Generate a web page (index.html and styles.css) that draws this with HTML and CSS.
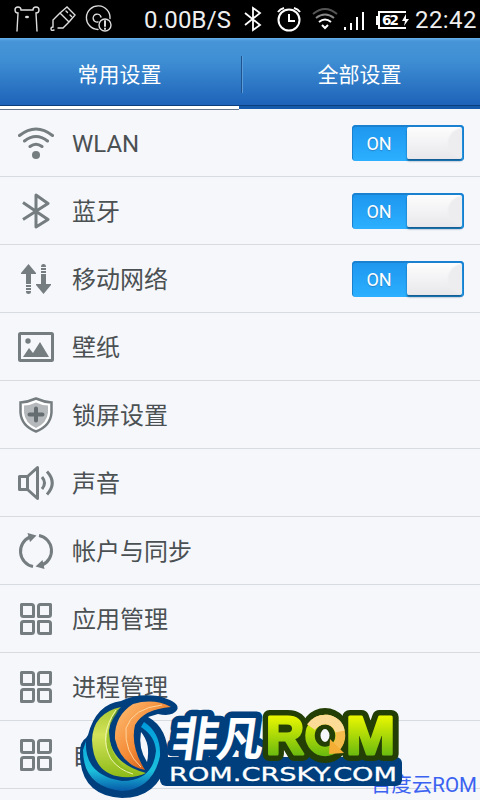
FILE: index.html
```
<!DOCTYPE html>
<html lang="zh-CN">
  <head>
    <meta charset="UTF-8" />
    <meta name="viewport" content="width=device-width, initial-scale=1.0" />
    <title>设置</title>
    <link rel="stylesheet" href="styles.css">
  </head>
  <body>
    <div class="phone">
      <!-- Status bar -->
      <header class="status-bar">
        <svg class="status-left" width="116" height="38" viewBox="0 0 116 38">
          <g fill="none" stroke="#ddd" stroke-width="1.4" stroke-linecap="round">
            <path d="M17 31l1-18a3 3 0 1 1 3-3h12a3 3 0 1 1 3 3l1 18" />
            <path d="M54 30q-3 1-3-1 0-2 2-2v-7l7-7 9 9-6 6h-5M60 13l7-6 8 8-6 7M66 11l1.500 1.500M70 15l1.500 1.500" />
            <path d="M98 29.500a11.800 11.800 0 1 1 12-11M98 22a4 4 0 1 1 3-5" />
            <circle cx="105" cy="25" r="6" />
            <path d="M105 21v5M105 28.500v.5" stroke-width="2" />
          </g>
          <ellipse cx="27" cy="17" rx="2" ry="1.200" fill="#ddd" />
        </svg>
        <span class="speed">0.00B/S</span>
        <svg class="status-right" width="170" height="38" viewBox="0 0 170 38">
          <g fill="none" stroke="#fff" stroke-width="2">
            <path d="M5 13l15 12-7 5V8l7 5L5 25" stroke-width="1.800" />
            <circle cx="49" cy="20" r="10.500" />
            <path d="M49 14v7h6M38 12q2-3 6-4M54 8q4 1 6 4" />
            <path d="M73 14q12-10 24 0" stroke="#555" />
            <path d="M76 18q9-7 18 0" stroke="#888" />
            <path d="M79 22q6-5 12 0" />
            <path d="M82 25l3 3 3-3" />
            <path d="M105 27v3M111 23v7M117 17v13M123 12v18" />
            <path d="M166 12h-27v16h27" />
          </g>
          <path d="M136 16h3v9h-3zM166 14l-4 7h3l-1 5 5-7h-3z" fill="#fff" />
          <text class="battery-text" x="142" y="25" textLength="17">62</text>
        </svg>
        <span class="clock">22:42</span>
      </header>

      <!-- Tabs -->
      <nav class="tabs">
        <a class="tab active">常用设置</a>
        <a class="tab">全部设置</a>
      </nav>

      <!-- Settings list -->
      <ul class="settings">
        <li class="row">
          <svg class="icon" viewBox="0 0 36 36">
            <g fill="none" stroke="#757d80" stroke-width="3" stroke-linecap="round">
              <path d="M1.500 10.500q16.500-13 33 0M6.500 16q11.500-9 23 0M12 21.500q6-4.500 12 0" />
            </g>
            <circle cx="18" cy="30" r="4" fill="#757d80" />
          </svg>
          <span class="label">WLAN</span>
          <span class="switch"><span class="switch-text">ON</span><span class="knob"></span></span>
        </li>
        <li class="row">
          <svg class="icon" viewBox="0 0 36 36">
            <path class="line" d="M5 9.500l25 17L18 34V2l12 8.500L5 26.500" />
          </svg>
          <span class="label">蓝牙</span>
          <span class="switch"><span class="switch-text">ON</span><span class="knob"></span></span>
        </li>
        <li class="row">
          <svg class="icon" viewBox="0 0 36 36" fill="#757d80">
            <path d="M10.500 3L18 12v1h-5v10H8V13H3v-1zM8 24h5v2H8zM8 27h5v2H8zM8 30h5v1q0 2-2.500 2T8 31z" />
            <path d="M25.500 33L33 24v-1h-5V13h-5v10h-5v1zM23 10h5v2h-5zM23 7h5v2h-5zM23 6q0-3 2.500-3T28 6z" />
          </svg>
          <span class="label">移动网络</span>
          <span class="switch"><span class="switch-text">ON</span><span class="knob"></span></span>
        </li>
        <li class="row">
          <svg class="icon" viewBox="0 0 36 36">
            <rect class="line" x="1.500" y="4.500" width="33" height="27" rx="1" />
            <path d="M5 28l6-9 4 5 7-11 9 15z" fill="#757d80" />
            <circle cx="10" cy="12" r="2.700" fill="#757d80" />
          </svg>
          <span class="label">壁纸</span>
        </li>
        <li class="row">
          <svg class="icon" viewBox="0 0 36 36">
            <path d="M18 1.500q8 3.500 15.500 4v10Q32.500 29 18 34.500 3.500 29 2.500 15.500v-10Q10 5 18 1.500z" fill="#fff" stroke="#757d80" stroke-width="2.500" />
            <path d="M18 5.500q6 3 12 3v7Q29 26 18 31 7 26 6 15.500v-7q6 0 12-3z" fill="#b5b9bb" />
            <path d="M18 11.500v12M11.500 17.500h13" stroke="#656d70" stroke-width="4" stroke-linecap="round" />
          </svg>
          <span class="label">锁屏设置</span>
        </li>
        <li class="row">
          <svg class="icon" viewBox="0 0 36 36">
            <path class="line" d="M9.500 11.500H1.500v13h8zM9.500 11.500l10-9v31l-10-9" />
            <path class="line" d="M24 12q5 6 0 12M29 6.500q10.500 11.500 0 23" />
          </svg>
          <span class="label">声音</span>
        </li>
        <li class="row">
          <svg class="icon" viewBox="0 0 36 36">
            <path class="line" d="M15 33.500A15.500 15.500 0 0 1 12 4M21 2.500a15.500 15.500 0 0 1 3 29.500" />
            <path d="M9.500 0l9 2.500-6.500 6.500zM26.500 36l-9-2.500 7-6.500z" fill="#757d80" />
          </svg>
          <span class="label">帐户与同步</span>
        </li>
        <li class="row">
          <svg class="icon" viewBox="0 0 36 36">
            <path class="line" d="M3.500 3.500h10q2 0 2 2v10h-10q-2 0-2-2zM32.500 3.500h-10q-2 0-2 2v10h10q2 0 2-2zM3.500 32.500h10q2 0 2-2v-10h-10q-2 0-2 2zM32.500 32.500h-10q-2 0-2-2v-10h10q2 0 2 2z" />
          </svg>
          <span class="label">应用管理</span>
        </li>
        <li class="row">
          <svg class="icon" viewBox="0 0 36 36">
            <path class="line" d="M3.500 3.500h10q2 0 2 2v10h-10q-2 0-2-2zM32.500 3.500h-10q-2 0-2 2v10h10q2 0 2-2zM3.500 32.500h10q2 0 2-2v-10h-10q-2 0-2 2zM32.500 32.500h-10q-2 0-2-2v-10h10q2 0 2 2z" />
          </svg>
          <span class="label">进程管理</span>
        </li>
        <li class="row">
          <svg class="icon" viewBox="0 0 36 36">
            <path class="line" d="M3.500 3.500h10q2 0 2 2v10h-10q-2 0-2-2zM32.500 3.500h-10q-2 0-2 2v10h10q2 0 2-2zM3.500 32.500h10q2 0 2-2v-10h-10q-2 0-2 2zM32.500 32.500h-10q-2 0-2-2v-10h10q2 0 2 2z" />
          </svg>
          <span class="label">自启管理</span>
        </li>
      </ul>

      <span class="watermark">百度云ROM</span>

      <!-- Site logo over the list -->
      <svg class="logo" width="330" height="108" viewBox="76 692 330 108">
        <defs>
          <linearGradient id="green" x1="0" y1="0" x2="0" y2="1">
            <stop offset="0" stop-color="#a9c832" />
            <stop offset=".4" stop-color="#d3e35a" />
            <stop offset="1" stop-color="#8dbb18" />
          </linearGradient>
          <linearGradient id="letters" gradientUnits="userSpaceOnUse" x1="0" y1="714" x2="0" y2="758">
            <stop offset="0" stop-color="#f0fa00" />
            <stop offset="1" stop-color="#62b610" />
          </linearGradient>
          <linearGradient id="orange" x1="0" y1="0" x2="1" y2="1">
            <stop offset="0" stop-color="#ffc078" />
            <stop offset=".5" stop-color="#f38a35" />
            <stop offset="1" stop-color="#b83a08" />
          </linearGradient>
          <linearGradient id="ice" gradientUnits="userSpaceOnUse" x1="0" y1="714" x2="0" y2="760">
            <stop offset="0" stop-color="#fff" />
            <stop offset="1" stop-color="#c6ebff" />
          </linearGradient>
          <linearGradient id="aqua" x1="0" y1="0" x2="0" y2="1">
            <stop offset="0" stop-color="#009bdc" />
            <stop offset=".7" stop-color="#1cc0dc" />
            <stop offset="1" stop-color="#075aa8" />
          </linearGradient>
        </defs>
        <rect x="160" y="757" width="242" height="29" rx="6" fill="#003f7d" />
        <path d="M88 735Q96 704 121 701Q137 693 158 696Q181 702 177 710Q172 717 158 714L148 717Q168 728 168 757Q160 798 122 798Q82 796 80 757Q79 742 86 738z" fill="#003f7d" />
        <path d="M141 732Q151 744 147 762Q138 748 141 732z" fill="#f5f7fb" />
        <path d="M86 741Q84 775 122 781Q153 781 156 751Q155 736 141 727L144 722Q161 733 160 756Q153 789 122 791Q83 787 83 750z" fill="url(#aqua)" />
        <path d="M121 707Q93 713 92 740Q93 774 122 777Q137 778 146 773Q108 763 109 730Q111 715 121 707z" fill="url(#green)" />
        <path d="M119 710Q99 736 111 759Q121 773 137 774Q110 765 109 730Q111 715 119 710z" fill="#8cba1c" opacity=".7" />
        <path d="M116 710Q98 736 111 759Q119 770 133 774" fill="none" stroke="#eef5b0" stroke-width="1" />
        <path d="M171 707Q154 698 133 704Q114 716 115 739Q121 765 145 770Q130 746 135 725Q144 709 171 707z" fill="url(#orange)" />
        <path d="M162 705Q133 708 126 728Q124 752 141 767" fill="none" stroke="#ffd49b" stroke-width="1" />
        <g class="logo-cn" transform="translate(168 756) skewX(-8)">
          <text class="cn-outline" x="2" y="0" textLength="92">非凡</text>
          <text class="cn-fill" x="2" y="0" textLength="92">非凡</text>
        </g>
        <g class="logo-rom">
          <g class="rom-outline">
            <text x="266" y="754" textLength="38" lengthAdjust="spacingAndGlyphs">R</text>
            <text x="346" y="754" textLength="49" lengthAdjust="spacingAndGlyphs">M</text>
          </g>
          <ellipse cx="325" cy="735.500" rx="15" ry="17" fill="none" stroke="#233f06" stroke-width="21" />
          <g class="rom-fill">
            <text x="266" y="754" textLength="38" lengthAdjust="spacingAndGlyphs">R</text>
            <text x="346" y="754" textLength="49" lengthAdjust="spacingAndGlyphs">M</text>
          </g>
        </g>
        <ellipse cx="325" cy="735.500" rx="15" ry="16" fill="none" stroke="url(#letters)" stroke-width="9.500" />
        <path d="M311 727q6-8 16-7.500 13 3 13.500 16 0 6-4 11" fill="none" stroke="#f5bc4c" stroke-width="9.500" />
        <path d="M311 727q6-8 16-7.500 11 2 13 12" fill="none" stroke="#fbdb96" stroke-width="9.500" />
        <path d="M330 739l-1 15 15-1z" fill="#f4ad35" />
        <text class="logo-url" x="169" y="780.500" textLength="228" lengthAdjust="spacingAndGlyphs">ROM.CRSKY.COM</text>
      </svg>
    </div>
  </body>
</html>
```

FILE: styles.css
```
:root {
  --icon-color: #757d80;
  --text-color: #4b5053;
  --page-bg: #f5f7fb;
  --navy: #003f7d;
}

* {
  box-sizing: border-box;
}

body {
  margin: 0;
  font-family: Roboto, "Noto Sans CJK SC", sans-serif;
  background: var(--page-bg);
}

.phone {
  position: relative;
  width: 480px;
  height: 800px;
  overflow: hidden;
}

.status-bar {
  display: flex;
  align-items: center;
  height: 38px;
  background: #000;
  color: #eee;
  font-size: 24px;
  line-height: 38px;
  white-space: nowrap;
}

.status-left {
  flex: none;
}

.speed {
  width: 124px;
  padding-left: 28px;
  padding-top: 2px;
  letter-spacing: 0.2px;
}

.status-right {
  flex: none;
}

.clock {
  padding-left: 5px;
  padding-top: 2px;
  letter-spacing: 0.4px;
}

.battery-text {
  font-family: "DejaVu Sans", sans-serif;
  font-size: 13.5px;
  font-weight: bold;
  fill: #fff;
}

.tabs {
  position: relative;
  display: flex;
  height: 71px;
  background: linear-gradient(#69b0ea 0, #4795d8 3px, #3f8fd4 22px, #1e63b9 67px, #0d3e7c 67px, #0d3e7c 68px, #155bab 68px);
}

.tabs::after {
  content: "";
  position: absolute;
  left: 241px;
  top: 18px;
  width: 2px;
  height: 37px;
  background: linear-gradient(90deg, #1d548e 50%, #5c9cdb 50%);
}

.tab {
  width: 239px;
  height: 72px;
  color: #fff;
  font-size: 21px;
  line-height: 75px;
  text-align: center;
}

.tab + .tab {
  width: 241px;
}

.tab.active {
  background: linear-gradient(#fff, #fff) 0 68px / 100% 3px no-repeat;
  border-bottom: 1px solid #65758a;
}

.settings {
  list-style: none;
  margin: 0;
  padding: 0;
}

.row {
  display: flex;
  align-items: center;
  height: 68px;
  padding: 0 16px 0 18px;
  border-bottom: 1px solid #d8dbe0;
}

.icon {
  flex: none;
  width: 36px;
  height: 36px;
}

.line {
  fill: none;
  stroke: var(--icon-color);
  stroke-width: 3;
  stroke-linejoin: round;
}

.label {
  flex: 1;
  margin-left: 18px;
  padding-top: 2px;
  color: var(--text-color);
  font-size: 24px;
  line-height: 36px;
}

.switch {
  display: flex;
  width: 112px;
  height: 36px;
  padding: 2px;
  border-radius: 4px;
  background: linear-gradient(#1d96ee, #2cb0ff);
  box-shadow: inset 0 1px 0 1px #1981d0;
}

.switch-text {
  width: 53px;
  padding-right: 3px;
  color: #fff;
  font-size: 18px;
  line-height: 34px;
  text-align: center;
  text-shadow: 0 1px 1px #2a7fc0;
}

.knob {
  width: 55px;
  height: 32px;
  border-radius: 2px;
  background: radial-gradient(circle at 56px 16px, #ededf0 14px, transparent 16px), linear-gradient(#fdfdfd, #e8e8ec);
  box-shadow: 0 2px 2px rgba(0, 35, 70, 0.6);
}

/* Overlays */
.watermark {
  position: absolute;
  right: 3px;
  bottom: 1px;
  color: #3b62f0;
  font-size: 20.5px;
  line-height: 28px;
}

.logo {
  position: absolute;
  left: 76px;
  top: 692px;
}

.logo-cn {
  font-family: "Noto Sans CJK SC", sans-serif;
  font-size: 47px;
  font-weight: bold;
}

.cn-outline {
  fill: var(--navy);
  stroke: var(--navy);
  stroke-width: 13;
  stroke-linejoin: round;
}

.cn-fill {
  fill: url(#ice);
}

.logo-rom {
  font-family: "Liberation Sans", sans-serif;
  font-size: 54px;
  font-weight: bold;
  stroke-linejoin: round;
}

.rom-outline {
  fill: #233f06;
  stroke: #233f06;
  stroke-width: 14;
}

.rom-fill {
  fill: url(#letters);
  stroke: url(#letters);
  stroke-width: 3;
}

.logo-url {
  font-family: "DejaVu Sans", sans-serif;
  font-size: 19.5px;
  fill: #fff;
  stroke: #fff;
  stroke-width: 0.3;
}
```
